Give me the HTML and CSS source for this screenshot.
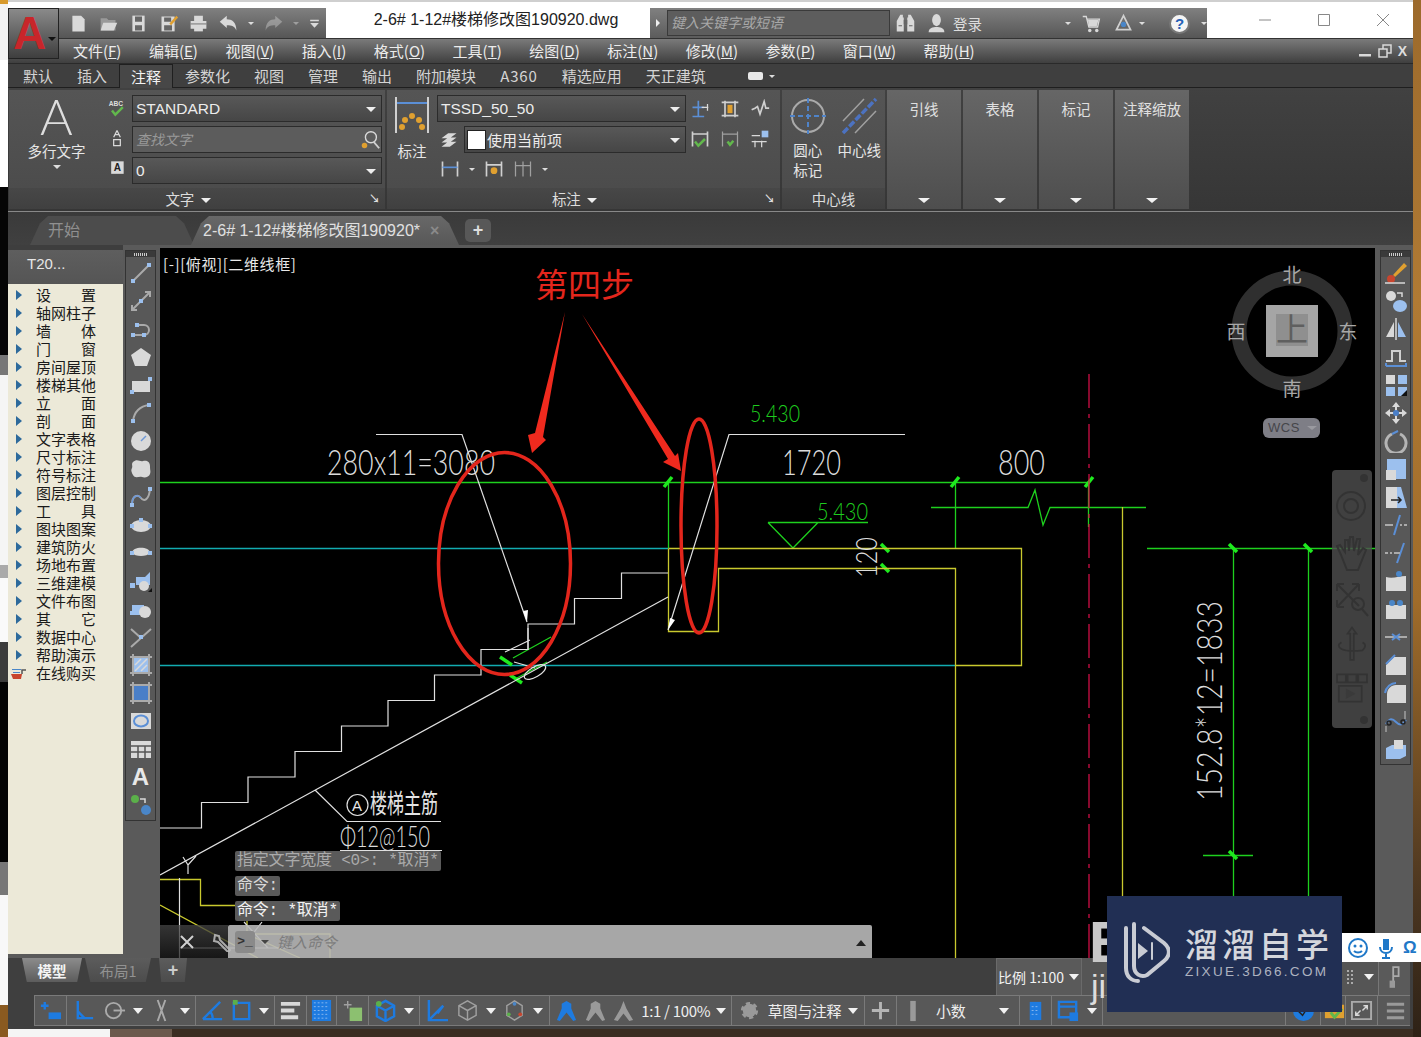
FILE: index.html
```html
<!DOCTYPE html>
<html lang="zh-CN">
<head>
<meta charset="utf-8">
<title>AutoCAD</title>
<link rel="stylesheet" href="styles.css">
</head>
<body>
<div class="app">

  <header class="titlebar">
    <div class="logo"><span class="logo-a">A</span><span class="logo-caret"></span></div>
    <div class="qat">
      <svg class="qi" viewBox="0 0 24 24"><path class="fw" d="M5 3h10l4 4v14H5z"/></svg>
      <svg class="qi" viewBox="0 0 24 24"><path class="fg" d="M3 6h7l2 2h8v12H3z"/><path class="fw" d="M6 11h16l-4 9H3z"/></svg>
      <svg class="qi" viewBox="0 0 24 24"><path class="fw" d="M5 3h14v18H5z"/><path class="fd" d="M8 4h8v6H8zM8 14h8v6H8z"/></svg>
      <svg class="qi" viewBox="0 0 24 24"><path class="fw" d="M4 4h15v17H4z"/><path class="fd" d="M7 5h8v5H7zM7 14h9v6H7z"/><path class="fy" d="M13 12l8-9 2 2-8 9z"/></svg>
      <svg class="qi" viewBox="0 0 24 24"><path class="fw" d="M7 3h10v6H7zM3 9h18v9H3z"/><path class="fd" d="M3 12h18v1H3z"/><path class="fw" d="M7 15h10v6H7z"/></svg>
      <svg class="qi" viewBox="0 0 24 24"><path class="fw" d="M2 10l8-7v4c6 0 11 3 11 13-2-5-5-6-11-6v3z"/></svg>
      <span class="mini-caret"></span>
      <svg class="qi dim" viewBox="0 0 24 24"><path class="fw" d="M22 10l-8-7v4C8 7 3 10 3 20c2-5 5-6 11-6v3z"/></svg>
      <span class="mini-caret dim"></span>
      <svg class="qi sm" viewBox="0 0 24 24"><path class="fw" d="M4 5h16v3H4zM4 11h16l-8 9z"/></svg>
    </div>
    <div class="doc-title">2-6# 1-12#楼梯修改图190920.dwg</div>
    <div class="search">
      <span class="search-arrow"></span>
      <div class="search-input">键入关键字或短语</div>
    </div>
    <div class="info-tools">
      <svg class="qi" viewBox="0 0 24 24"><path class="fw" d="M6 2h3v3h1v16H2V9zM15 2h3l4 7v12h-8V5h1z"/><path class="fd" d="M10 8h4v5h-4z"/><path class="fd" d="M4 14h4v1H4zM16 14h4v1h-4z"/></svg>
      <svg class="qi user" viewBox="0 0 24 24"><ellipse class="fw" cx="12" cy="8" rx="5" ry="7"/><path class="fw" d="M3 22c0-5 5-6 9-6s9 1 9 6z"/></svg>
      <span class="login">登录</span>
      <span class="mini-caret push"></span>
      <svg class="qi cart" viewBox="0 0 24 24"><path class="sw" d="M2 4h4l3 12h10l2-9H7"/><path class="fw" d="M8 8h12l-2 7H9z"/><circle class="fw" cx="10" cy="20" r="2"/><circle class="fw" cx="18" cy="20" r="2"/></svg>
      <svg class="qi a360" viewBox="0 0 24 24"><path class="sw2" d="M12 3l8 16H4z"/><circle class="fb" cx="12" cy="13" r="3"/></svg>
      <span class="mini-caret"></span>
      <span class="help">?</span>
      <span class="mini-caret"></span>
    </div>
    <div class="win-ctl">
      <svg viewBox="0 0 14 14"><path class="wc" d="M1 7h12"/></svg>
      <svg viewBox="0 0 14 14"><path class="wc" d="M1.5 1.5h11v11h-11z"/></svg>
      <svg viewBox="0 0 14 14"><path class="wc" d="M1 1l12 12M13 1L1 13"/></svg>
    </div>
  </header>

  <nav class="menubar">
    <span>文件(<u>F</u>)</span><span>编辑(<u>E</u>)</span><span>视图(<u>V</u>)</span><span>插入(<u>I</u>)</span><span>格式(<u>O</u>)</span><span>工具(<u>T</u>)</span><span>绘图(<u>D</u>)</span><span>标注(<u>N</u>)</span><span>修改(<u>M</u>)</span><span>参数(<u>P</u>)</span><span>窗口(<u>W</u>)</span><span>帮助(<u>H</u>)</span>
    <div class="doc-ctl">
      <svg viewBox="0 0 14 14"><path class="fw" d="M1 10h12v2.500H1z"/></svg>
      <svg viewBox="0 0 14 14"><path class="sw" d="M1 5h8v8H1zM5 5V1h8v8H9"/></svg>
      <span class="doc-x">X</span>
    </div>
  </nav>

  <div class="ribbon-tabs">
    <span>默认</span><span>插入</span><span class="on">注释</span><span>参数化</span><span>视图</span><span>管理</span><span>输出</span><span>附加模块</span><span class="a360-tab">A360</span><span>精选应用</span><span>天正建筑</span>
    <span class="rt-toggle"><i class="rt-pill"></i><i class="mini-caret"></i></span>
  </div>

  <section class="ribbon">
    <div class="pnl pnl-text">
      <div class="pnl-body">
        <div class="big-a">
          <span class="big-letter">A</span>
          <span class="big-label">多行文字</span>
          <span class="mini-caret"></span>
        </div>
        <div class="side-col">
          <svg class="ri" viewBox="0 0 24 24"><text x="2" y="10" class="tiny">ABC</text><path class="sgreen" d="M6 15l4 5 9-9"/></svg>
          <svg class="ri" viewBox="0 0 24 24"><path class="sw" d="M12 3l-4 8M12 3l4 8M9 8h6M8 14h8v7H8z"/></svg>
          <svg class="ri" viewBox="0 0 24 24"><path class="fw" d="M5 4h15v15H5z"/><text x="8" y="16" class="tiny-d">A</text></svg>
        </div>
        <div class="combo-col">
          <div class="combo"><span>STANDARD</span></div>
          <div class="combo find"><em>查找文字</em><svg class="find-i" viewBox="0 0 24 24"><circle class="sw" cx="13" cy="9" r="6"/><path class="sw2" d="M16 14l6 7"/><circle class="fy" cx="6" cy="18" r="3"/></svg></div>
          <div class="combo"><span>0</span></div>
        </div>
      </div>
      <div class="pnl-foot">文字 <i class="foot-caret"></i><i class="launch">↘</i></div>
    </div>

    <div class="pnl pnl-dim">
      <div class="pnl-body">
        <div class="big-dim">
          <svg viewBox="0 0 36 38"><path class="sw2" d="M2 1v36M34 1v36"/><path class="sblue2" d="M3 7h30"/><circle class="fy" cx="18" cy="20" r="3"/><circle class="fy" cx="11" cy="24" r="3"/><circle class="fy" cx="25" cy="24" r="3"/><circle class="fy" cx="8" cy="31" r="3"/><circle class="fy" cx="28" cy="31" r="3"/></svg>
          <span>标注</span>
        </div>
        <div class="combo-col dim-col">
          <div class="combo"><span>TSSD_50_50</span></div>
          <div class="dim-row">
            <svg class="ri layers" viewBox="0 0 24 24"><path class="fw" d="M3 10l8-6h10l-8 6zM3 15l8-6h10l-8 6zM3 20l8-6h10l-8 6z"/></svg>
            <div class="combo swatch-combo"><i class="swatch"></i><span>使用当前项</span></div>
          </div>
          <div class="dim-tools">
            <svg class="ri" viewBox="0 0 24 24"><path class="sw2" d="M3 3v18M21 3v18"/><path class="sblue2" d="M3 10h18"/></svg><span class="mini-caret"></span>
            <svg class="ri" viewBox="0 0 24 24"><path class="sw2" d="M3 3v18M21 3v18M3 7h18"/><circle class="fy" cx="12" cy="14" r="4"/></svg>
            <svg class="ri" viewBox="0 0 24 24"><path class="sg" d="M3 3v18M12 3v18M21 3v18M3 8h18"/></svg><span class="mini-caret"></span>
          </div>
        </div>
        <div class="dim-grid">
          <svg class="ri" viewBox="0 0 24 24"><path class="sblue2" d="M10 2v20M3 21h14M3 10h14"/><path class="sw" d="M14 10h8M21 6v8"/></svg>
          <svg class="ri" viewBox="0 0 24 24"><path class="sw2" d="M2 4h20M2 20h20M6 2v20M18 2v20"/><path class="fy" d="M9 7h6v10H9z"/></svg>
          <svg class="ri" viewBox="0 0 24 24"><path class="sw2" d="M2 13l4-2 3-2 3 9 5-15 2 8h4"/></svg>
          <svg class="ri" viewBox="0 0 24 24"><path class="sw2" d="M3 3v18M21 3v18M3 6h18"/><path class="sgreen" d="M6 15l4 5 8-8"/></svg>
          <svg class="ri" viewBox="0 0 24 24"><path class="sg" d="M3 3v18M21 3v18M3 6h18"/><path class="sgreen" d="M9 15l3 4 4-5"/></svg>
          <svg class="ri" viewBox="0 0 24 24"><path class="sw" d="M2 8h10M6 14v8M14 14v8M2 15h18"/><path class="flb" d="M14 2h8v8h-8z"/></svg>
        </div>
      </div>
      <div class="pnl-foot">标注 <i class="foot-caret"></i><i class="launch">↘</i></div>
    </div>

    <div class="pnl pnl-center">
      <div class="pnl-body">
        <div class="cm-btn">
          <svg viewBox="0 0 38 38"><circle class="sg2" cx="19" cy="19" r="16"/><path class="sdash" d="M1 19h36M19 1v36"/></svg>
          <span>圆心<br>标记</span>
        </div>
        <div class="cm-btn">
          <svg viewBox="0 0 38 38"><path class="sg" d="M3 24L24 2M15 36L36 14"/><path class="sdash2" d="M3 36L36 2"/></svg>
          <span>中心线</span>
        </div>
      </div>
      <div class="pnl-foot center-foot">中心线</div>
    </div>

    <div class="collapsed"><span>引线</span><i class="white-caret"></i></div>
    <div class="collapsed"><span>表格</span><i class="white-caret"></i></div>
    <div class="collapsed"><span>标记</span><i class="white-caret"></i></div>
    <div class="collapsed"><span>注释缩放</span><i class="white-caret"></i></div>
  </section>

  <div class="doc-tabs">
    <div class="dt dt-start">开始</div>
    <div class="dt dt-active">2-6# 1-12#楼梯修改图190920*<b>×</b></div>
    <div class="dt-plus">+</div>
  </div>

  <main class="workspace">
    <aside class="t20">
      <div class="t20-head">T20...</div>
      <ul class="t20-list">
        <li><span>设 置</span></li><li><span>轴网柱子</span></li><li><span>墙 体</span></li><li><span>门 窗</span></li><li><span>房间屋顶</span></li><li><span>楼梯其他</span></li><li><span>立 面</span></li><li><span>剖 面</span></li><li><span>文字表格</span></li><li><span>尺寸标注</span></li><li><span>符号标注</span></li><li><span>图层控制</span></li><li><span>工 具</span></li><li><span>图块图案</span></li><li><span>建筑防火</span></li><li><span>场地布置</span></li><li><span>三维建模</span></li><li><span>文件布图</span></li><li><span>其 它</span></li><li><span>数据中心</span></li><li><span>帮助演示</span></li>
        <li class="buy"><svg viewBox="0 0 20 14"><path class="fb" d="M2 3h9v1H2zM3 6h7v1H3z"/><path class="fr" d="M1 8h11l-1 5H3z"/><path class="sd" d="M12 8V4h4"/></svg><span>在线购买</span></li>
      </ul>
    </aside>

    <div class="tool-strip">
      <div class="tool-col">
        <i class="grip"></i>
        <svg viewBox="0 0 24 24"><path class="sg2" d="M4 20L20 4"/><path class="flb" d="M2 18h4v4H2zM18 2h4v4h-4z"/></svg>
        <svg viewBox="0 0 24 24"><path class="sg2" d="M3 21L21 3M3 16v5h5M16 3h5v5"/><path class="flb" d="M10 10h4v4h-4z"/></svg>
        <svg viewBox="0 0 24 24"><path class="sg2" d="M5 18h10a5 5 0 0 0 0-10H9"/><path class="flb" d="M2 16h4v4H2zM13 16h4v4h-4zM6 6h4v4H6z"/></svg>
        <svg viewBox="0 0 24 24"><path class="fw" d="M12 3l10 7-4 11H6L2 10z"/></svg>
        <svg viewBox="0 0 24 24"><path class="fw" d="M3 8h18v11H3z"/><path class="flb" d="M1 17h4v4H1zM19 4h4v4h-4z"/></svg>
        <svg viewBox="0 0 24 24"><path class="sg2" d="M4 20C5 11 11 5 20 4"/><path class="flb" d="M2 18h4v4H2zM18 2h4v4h-4z"/></svg>
        <svg viewBox="0 0 24 24"><circle class="fw" cx="12" cy="12" r="10"/><path class="sblue" d="M12 12l5-5"/></svg>
        <svg viewBox="0 0 24 24"><path class="fw" d="M4 5c4-4 7 0 10-1s7 0 7 5 1 5 0 8-5 4-8 3-7 2-9-2-2-5-1-7-1-4 1-6z"/></svg>
        <svg viewBox="0 0 24 24"><path class="sg2" d="M3 20C3 10 9 9 12 13s8 2 9-9"/><path class="sblue" d="M3 20C3 10 9 9 12 13"/><path class="flb" d="M19 2h4v4h-4zM1 18h4v4H1z"/></svg>
        <svg viewBox="0 0 24 24"><ellipse class="fw" cx="12" cy="13" rx="10" ry="6"/><path class="flb" d="M10 5h4v4h-4zM1 11h4v4H1zM19 11h4v4h-4z"/></svg>
        <svg viewBox="0 0 24 24"><path class="fw" d="M3 12c0-7 18-7 18 0-3 4-15 4-18 0z"/><path class="flb" d="M1 10h4v4H1zM19 10h4v4h-4z"/></svg>
        <svg viewBox="0 0 24 24"><path class="flb" d="M7 8h9l5-5v13H7z"/><circle class="fw" cx="15" cy="17" r="5"/><path class="flb" d="M1 14h5v5H1z"/><path class="fk" d="M19 23l4-4v4z"/></svg>
        <svg viewBox="0 0 24 24"><path class="flb" d="M3 8h12v10H3z"/><circle class="fw" cx="16" cy="15" r="6"/><path class="flb" d="M1 14h4v4H1z"/></svg>
        <svg viewBox="0 0 24 24"><path class="sg2" d="M2 22L22 4M2 4l10 9"/><path class="flb" d="M10 10h4v4h-4z"/></svg>
        <svg viewBox="0 0 24 24"><path class="flb" d="M4 4h16v16H4z"/><path class="sg2" d="M1 4h22M1 20h22M4 1v22M20 1v22"/><path class="sw" d="M6 12l6-6M6 18l12-12M12 18l6-6"/></svg>
        <svg viewBox="0 0 24 24"><path class="fblue" d="M4 4h16v16H4z"/><path class="sg2" d="M1 4h22M1 20h22M4 1v22M20 1v22"/></svg>
        <svg viewBox="0 0 24 24"><path class="fw" d="M2 4h20v16H2z"/><ellipse class="sblue2" cx="12" cy="12" rx="7" ry="5.500"/></svg>
        <svg viewBox="0 0 24 24"><path class="fw" d="M2 4h20v17H2z"/><path class="sd" d="M2 9h20M2 15h20M9 9v12M16 9v12"/></svg>
        <span class="tool-a">A</span>
        <svg viewBox="0 0 24 24"><circle class="fgreen" cx="6" cy="6" r="4"/><path class="sw" d="M11 6h5v4"/><circle class="fb" cx="17" cy="17" r="5"/></svg>
      </div>
    </div>

    <div class="canvas">
      <svg class="cad" viewBox="160 248 1215 710" preserveAspectRatio="none">
        <g class="teal">
          <path d="M160 548.500H668M160 665.500H955"/>
        </g>
        <g class="green">
          <path d="M160 482.500H1089M668.500 482V548M955.500 482V548M1088.500 482V527M931 507.500H1028L1035 490 1043 525 1050 507.500H1146M1147 548.500H1375M1233.500 548V958M1308.500 548V958M1203 855.500H1253M513 658L551 637M517 678L547 662"/>
          <path d="M768 522.500H868M768 522.500L793 548 818 522.500"/>
        </g>
        <g class="ticks">
          <path d="M664 487L672 477M951 487L959 477M1085 487L1093 477M1229 544L1237 552M1304 544L1312 552M1229 851L1237 859M881 544L889 552M881 564L889 572M500 657L512 665M510 675L522 683"/>
        </g>
        <g class="yellow">
          <path d="M668.500 548.500H1021.500V665.500H955.500M668.500 548.500V631.500H718.500V568.500H955.500V958M1122.500 507V958"/>
          <path d="M160 879.500H200.500V905.500H236M160 905L258 958M247 920V934M247 934H330V958M247 934L300 958"/>
        </g>
        <path class="redcl" d="M1089 374V958"/>
        <g class="white">
          <path d="M668 573H621.500V598.500H574.500V624H528V649.500H481V675H434.500V700.500H388V726H341.500V751.500H295V777H248V802.500H201.500V828H160"/>
          <path d="M668 597L160 875M315 790L347 821.500H441M340 850.500H442M376 434.500H462L527 622M905 434.500H729L668 630M528 628V650M530 640L505 652M514 662L535 668"/>
          <path d="M183 857L188 865 196 856M188 865V874M179.500 878V958M179.500 948L288 948M244 922L268 948M262 922L240 950"/>
          <ellipse cx="535" cy="672" rx="12" ry="5" transform="rotate(-30 535 672)"/>
          <circle cx="357.500" cy="805" r="10.500"/>
        </g>
        <path class="apoint" d="M527 622l-4-11 5-1zM668 630l2-12 5 2z"/>
        <text class="cad-t" x="327" y="475" textLength="168" lengthAdjust="spacingAndGlyphs">280x11=3080</text>
        <text class="cad-t" x="782" y="475" textLength="59" lengthAdjust="spacingAndGlyphs">1720</text>
        <text class="cad-t" x="998" y="475" textLength="47" lengthAdjust="spacingAndGlyphs">800</text>
        <text class="cad-g" x="750" y="422" textLength="50" lengthAdjust="spacingAndGlyphs">5.430</text>
        <text class="cad-g" x="817" y="520" textLength="51" lengthAdjust="spacingAndGlyphs">5.430</text>
        <text class="cad-t t26" transform="translate(877 578) rotate(-90)" textLength="41" lengthAdjust="spacingAndGlyphs">120</text>
        <text class="cad-t" transform="translate(1222 801) rotate(-90)" textLength="200" lengthAdjust="spacingAndGlyphs">152.8*12=1833</text>
        <text class="cad-s" x="352" y="811">A</text>
        <text class="cad-c" x="370" y="813" textLength="68" lengthAdjust="spacingAndGlyphs">楼梯主筋</text>
        <text class="cad-t t30" x="340" y="847" textLength="90" lengthAdjust="spacingAndGlyphs">Φ12@150</text>
        <text class="note" x="535" y="297">第四步</text>
        <ellipse class="red" cx="504.500" cy="563.500" rx="66" ry="111"/>
        <ellipse class="red" cx="699" cy="526" rx="18" ry="107"/>
        <path class="redf" d="M565 312L543 437 546 440 532 453 528 435 535 433z"/>
        <path class="redf" d="M582 314L675 456 678 453 681 471 663 462 668 459z"/>
        <circle class="cube-ring" cx="1292" cy="331" r="53"/>
        <rect class="cube-face" x="1266" y="305" width="52" height="52"/>
        <rect class="cube-inner" x="1276" y="314" width="32" height="32"/>
        <text class="cube-top" x="1292" y="341">上</text>
        <text class="cube-l" x="1292" y="282">北</text>
        <text class="cube-l" x="1292" y="396">南</text>
        <text class="cube-l" x="1348" y="339">东</text>
        <text class="cube-l" x="1236" y="339">西</text>
      </svg>

      <div class="view-label">[-][俯视][二维线框]</div>
      <div class="wcs">WCS <i></i></div>

      <div class="navbar">
        <i class="nb-dot"></i>
        <svg viewBox="0 0 40 44"><circle class="nb" cx="19" cy="22" r="14"/><circle class="nb" cx="19" cy="22" r="7"/></svg>
        <svg viewBox="0 0 40 44"><path class="nb" d="M9 24l-4-9 3-1 5 7V9h3l1 11 1-14h3l1 14 3-12h3l-2 16 5-7 3 2-8 20H15z"/></svg>
        <svg viewBox="0 0 40 44"><path class="nb" d="M5 7l22 22M5 30L27 7M5 7h7M5 7v7M27 7h-7M27 7v7M5 30h7M5 30v-7"/><circle class="nb" cx="26" cy="27" r="6"/><path class="nb" d="M30 32l6 7"/></svg>
        <svg viewBox="0 0 40 50"><path class="nb" d="M20 5l-5 7h3v30h4V12h3zM8 22c-8 5 0 12 24 9 4-4 4-7 0-9"/></svg>
        <svg viewBox="0 0 40 50"><path class="nb" d="M3 5h10v9H3zM15 5h10v9H15zM27 5h10v9H27zM5 18h26v18H5z"/><path class="nbf" d="M13 21l11 6-11 6z"/></svg>
        <i class="nb-dot"></i>
      </div>

      <div class="cmd-history">
        <div class="cmd-line dim">指定文字宽度 &lt;0&gt;: *取消*</div>
        <div class="cmd-line">命令:</div>
        <div class="cmd-line bright">命令: *取消*</div>
      </div>
      <div class="cmdbar">
        <div class="cmd-tools">
          <i class="cmd-grip"></i>
          <svg viewBox="0 0 20 20"><path class="sw2" d="M4 4l12 12M16 4L4 16"/></svg>
          <svg viewBox="0 0 20 20"><path class="sg2" d="M3 3l4 1 1 4 10 10-2 2L6 10 2 9z"/></svg>
        </div>
        <div class="cmd-input">
          <span class="cmd-prompt">&gt;_</span><i class="cmd-caret"></i>
          <em>键入命令</em>
          <i class="cmd-up"></i>
        </div>
      </div>
    </div>

    <div class="tool-strip right">
      <div class="tool-col">
        <i class="grip"></i>
        <svg viewBox="0 0 24 24"><path class="fy" d="M9 14L20 2l3 3-12 11z"/><circle class="fr" cx="7" cy="18" r="4"/><path class="sw" d="M1 22h20"/></svg>
        <svg viewBox="0 0 24 24"><circle class="fw" cx="7" cy="7" r="5"/><ellipse class="flb" cx="16" cy="17" rx="7" ry="6"/><path class="sw" d="M13 4h5v4"/></svg>
        <svg viewBox="0 0 24 24"><path class="fw" d="M10 5v15H2z"/><path class="flb" d="M14 5v15h8z"/><path class="sw" d="M12 1v22"/></svg>
        <svg viewBox="0 0 24 24"><path class="sw2" d="M2 16h6V6h8v10h6"/><path class="sblue2" d="M2 21h20v-3M2 21v-3"/></svg>
        <svg viewBox="0 0 24 24"><path class="fw" d="M2 2h9v9H2z"/><path class="flb" d="M14 2h9v9h-9zM2 14h9v9H2zM14 14h9v9h-9z"/><path class="fk" d="M17 23l6-6v6z"/></svg>
        <svg viewBox="0 0 24 24"><path class="fw" d="M12 1l4 5h-3v5h5V8l5 4-5 4v-3h-5v5h3l-4 5-4-5h3v-5H6v3l-5-4 5-4v3h5V6H8z"/><circle class="fblue" cx="12" cy="12" r="3"/></svg>
        <svg viewBox="0 0 24 24"><path class="sg3" d="M8 5a10 10 0 1 0 8 0"/><path class="sblue2" d="M8 5l6-3"/></svg>
        <svg viewBox="0 0 24 24"><path class="flb" d="M3 2h19v20H3z"/><path class="fw" d="M2 13h10v10H2z"/></svg>
        <svg viewBox="0 0 24 24"><path class="fw" d="M2 2h11v21H2z"/><path class="flb" d="M13 2h4l6 21H13z"/><path class="sk" d="M7 15h10M14 12l3 3-3 3"/></svg>
        <svg viewBox="0 0 24 24"><path class="sblue2" d="M10 22L16 2"/><path class="sg2" d="M1 12h8M16 12h2M20 12h3"/></svg>
        <svg viewBox="0 0 24 24"><path class="sblue2" d="M13 22L20 2"/><path class="sg2" d="M1 12h3M6 12h2M10 12h6"/></svg>
        <svg viewBox="0 0 24 24"><path class="fw" d="M2 8c7 2 13-1 20-1v15H2z"/><circle class="fb" cx="15" cy="5" r="3"/></svg>
        <svg viewBox="0 0 24 24"><path class="fw" d="M2 8h20v14H2z"/><circle class="fb" cx="8" cy="6" r="3"/><circle class="fb" cx="16" cy="6" r="3"/></svg>
        <svg viewBox="0 0 24 24"><path class="sg2" d="M1 12h22"/><path class="sblue2" d="M8 9l4 3 4-3M8 15l4-3 4 3"/></svg>
        <svg viewBox="0 0 24 24"><path class="fw" d="M10 4h12v18H2V12z"/><path class="sblue2" d="M2 11l9-9"/></svg>
        <svg viewBox="0 0 24 24"><path class="fw" d="M12 4h10v18H3v-9c0-5 4-9 9-9z"/><path class="sblue2" d="M1 12C2 6 7 2 12 2"/></svg>
        <svg viewBox="0 0 24 24"><path class="sblue2" d="M2 15c4-6 6-6 10-2s7 3 10-2"/><circle class="sk" cx="5" cy="14" r="2"/><circle class="sk" cx="19" cy="13" r="2"/><path class="sg" d="M2 17v6M21 2v8"/></svg>
        <svg viewBox="0 0 24 24"><path class="flb" d="M2 11l6-3h14v11l-6 3H2z"/><path class="fw" d="M10 3h9v9h-9z"/></svg>
      </div>
    </div>
  </main>

  <footer class="bottom">
    <div class="layout-row">
      <div class="ltab on">模型</div>
      <div class="ltab">布局1</div>
      <div class="ltab plus">+</div>
      <div class="scale-group">
        <div class="scale">比例 1:100 <i class="white-caret sm"></i></div>
        <div class="scale-blank"></div>
        <div class="scale-dots"><i class="dots"></i><i class="white-caret sm"></i></div>
        <div class="scale-note"><svg viewBox="0 0 20 26"><path class="sg2" d="M8 2h6v10H8zM8 12v12"/><path class="fg" d="M4 17h6v8H4z"/></svg></div>
      </div>
    </div>
    <div class="statusbar">
      <div class="st w32"><svg viewBox="0 0 24 24"><path class="ssb" d="M6 3v8M2 7h8"/><path class="fsb" d="M10 14h13v7H10z"/></svg></div>
      <div class="st w129">
        <svg viewBox="0 0 24 24"><path class="ssb" d="M5 2v18h16M5 13l7 7"/></svg>
        <svg viewBox="0 0 24 24"><circle class="sg2" cx="11" cy="12" r="8"/><path class="sg2" d="M11 12h12"/></svg><i class="white-caret sm"></i>
        <svg viewBox="0 0 24 24"><path class="sg2" d="M8 1l8 22M16 1L8 23"/></svg><i class="white-caret sm"></i>
      </div>
      <div class="st w79">
        <svg viewBox="0 0 24 24"><path class="ssb" d="M2 21h20M2 21L20 3M12 21a9 9 0 0 0-3-8"/></svg>
        <svg viewBox="0 0 24 24"><path class="ssb" d="M4 4h16v17H4z"/><path class="fgreen" d="M3 1h5v5H3z"/></svg><i class="white-caret sm"></i>
      </div>
      <div class="st w32"><svg viewBox="0 0 24 24"><path class="fw" d="M2 3h20v4H2zM2 10h14v4H2zM2 17h18v4H2z"/></svg></div>
      <div class="st w30"><svg viewBox="0 0 24 24"><path class="fsb" d="M2 1h20v22H2z"/><path class="dotsb" d="M4 4h16M4 8h16M4 12h16M4 16h16M4 20h16"/></svg></div>
      <div class="st w32"><svg viewBox="0 0 24 24"><path class="sg" d="M3 6h8M7 2v8"/><path class="fgl" d="M9 9h13v14H9z"/></svg></div>
      <div class="st w51"><svg viewBox="0 0 24 24"><path class="ssb" d="M12 2l9 5v11l-9 5-9-5V7zM12 12l9-5M12 12v11M12 12L3 7"/><circle class="fgreen" cx="5" cy="5" r="3"/></svg><i class="white-caret sm"></i></div>
      <div class="st w130">
        <svg viewBox="0 0 24 24"><path class="ssb" d="M3 1v21h20M3 22L18 7M12 15l6-8"/></svg>
        <svg viewBox="0 0 24 24"><path class="sg" d="M12 2l9 5v10l-9 5-9-5V7zM12 12l9-5M12 12v10M12 12L3 7"/></svg><i class="white-caret sm"></i>
        <svg viewBox="0 0 24 24"><path class="sg" d="M12 2l8 5v10l-8 5-8-5V7z"/><circle class="fb" cx="12" cy="5" r="2"/><circle class="fgreen" cx="6" cy="16" r="2"/><circle class="fr" cx="18" cy="16" r="2"/></svg><i class="white-caret sm"></i>
      </div>
      <div class="st w182">
        <svg viewBox="0 0 24 24"><path class="fsb" d="M12 2l5 3v5l5 12-3 1-7-9-7 9-3-1 5-12V5z"/></svg>
        <svg viewBox="0 0 24 24"><path class="fg" d="M12 2l5 3v5l5 12-3 1-7-9-7 9-3-1 5-12V5z"/></svg>
        <svg viewBox="0 0 24 24"><path class="fg" d="M12 2l3 8 7 12-4 1-6-8-6 8-4-1 7-12z"/></svg>
        <span class="st-t">1:1 / 100%</span><i class="white-caret sm"></i>
      </div>
      <div class="st w133">
        <svg viewBox="0 0 24 24"><circle class="gear" cx="12" cy="12" r="7"/><circle class="fg" cx="12" cy="12" r="7"/></svg>
        <span class="st-t">草图与注释</span><i class="white-caret sm"></i>
      </div>
      <div class="st w32"><svg viewBox="0 0 24 24"><path class="sg3" d="M12 3v18M3 12h18"/></svg></div>
      <div class="st w123 st-num">
        <svg class="ruler" viewBox="0 0 10 24"><path class="fg" d="M2 1h6v22H2z"/></svg>
        <span class="st-t">小数</span><i class="white-caret sm"></i>
      </div>
      <div class="st w32"><svg viewBox="0 0 24 24"><path class="fsb" d="M6 3h12v19H6z"/><path class="dotsb" d="M8 8h8M8 12h8M8 16h8"/></svg></div>
      <div class="st w51"><svg viewBox="0 0 24 24"><path class="ssb" d="M2 3h18v16H2zM2 8h18"/><path class="fsb" d="M13 14h9v9h-9z"/></svg><i class="white-caret sm"></i></div>
      <div class="st w183"></div>
      <div class="st w35"><svg viewBox="0 0 24 24"><circle class="fsb" cx="12" cy="12" r="11"/><path class="sk" d="M7 13l4 4 6-9"/></svg></div>
      <div class="st w25"><svg viewBox="0 0 24 24"><path class="fy" d="M2 6h20v14H2z"/><path class="sgreen" d="M8 14l4 5 8-9"/></svg></div>
      <div class="st w32"><svg viewBox="0 0 24 24"><path class="sg2" d="M2 3h20v18H2z"/><path class="sw" d="M6 17l5-5M6 13v4h4M18 7l-5 5M18 11V7h-4"/></svg></div>
      <div class="st w35"><svg viewBox="0 0 24 24"><path class="fg" d="M3 4h18v3H3zM3 11h18v3H3zM3 18h18v3H3z"/></svg></div>
    </div>
  </footer>
</div>

<div class="peek peek-e">E</div>
<div class="peek peek-ji">ji</div>

<aside class="watermark">
  <svg viewBox="0 0 50 64"><path class="wm" d="M14 4v42c0 8 7 12 13 9l17-14c7-6 6-13 0-18L24 8"/><path class="wm" d="M6 8v40c0 8 5 13 12 13"/><path class="wmf" d="M18 23l10 8-10 8z"/><path class="wm thin" d="M32 23v16"/></svg>
  <div class="wm-text">
    <strong>溜溜自学</strong>
    <span>ZIXUE.3D66.COM</span>
  </div>
</aside>
<div class="ime">
  <svg viewBox="0 0 22 22"><circle class="ime-s" cx="11" cy="11" r="9"/><circle class="ime-f" cx="8" cy="9" r="1.500"/><circle class="ime-f" cx="14" cy="9" r="1.500"/><path class="ime-s" d="M7 14c2 2 6 2 8 0"/></svg>
  <svg viewBox="0 0 22 22"><path class="ime-f" d="M8 2h6v11H8z"/><path class="ime-s" d="M5 10c0 8 12 8 12 0M11 17v4M7 21h8"/></svg>
  <span>Ω</span>
</div>
</body>
</html>
```
FILE: styles.css
```css
* { box-sizing: border-box; }
html, body { margin: 0; padding: 0; }
body {
  position: relative;
  width: 1421px;
  height: 1037px;
  overflow: hidden;
  font-family: "Noto Sans CJK SC", "Noto Sans", sans-serif;
  color: #e6e6e6;
  background-color: #3a2a1c;
  background-image:
    linear-gradient(to bottom, #d89a2c 0 4px, #f2f2f2 4px 60px, #fff 60px 187px, #050505 187px 355px, #777 355px 375px, #f5f5f5 375px 565px, #aaa 565px 578px, #fafafa 578px 642px, #3c3c3c 642px 682px, #040404 682px 862px, #777 862px 895px, #f8f8f8 895px 1005px, #8a5a20 1005px 1037px),
    linear-gradient(to bottom, #9c6a2c 0, #b07a34 300px, #a06c2a 600px, #4a3520 900px, #2e2216 1037px),
    linear-gradient(to right, #f5f5f5 0 110px, #6b5a4d 110px 172px, #3b2e22 172px 100%);
  background-size: 8px 100%, 8px 100%, 100% 8px;
  background-position: left top, right top, left bottom;
  background-repeat: no-repeat;
}
i { font-style: normal; display: inline-block; }
svg { display: block; flex: none; }

/* shared svg paints */
.fw { fill: #d9d9d9; }
.fg { fill: #9a9a9a; }
.fd { fill: #666; }
.fy { fill: #e0a030; }
.fb { fill: #4a86c8; }
.fr { fill: #c8452e; }
.fk { fill: #111; }
.flb { fill: #9cc0ee; }
.fblue { fill: #4a7fc8; }
.fgreen { fill: #5bb04a; }
.fgl { fill: #8cc070; }
.fsb { fill: #1e7be0; }
.sw { fill: none; stroke: #d9d9d9; stroke-width: 1.500; }
.sw2 { fill: none; stroke: #d0d0d0; stroke-width: 2; }
.sg { fill: none; stroke: #a0a0a0; stroke-width: 1.500; }
.sg2 { fill: none; stroke: #aaa; stroke-width: 2; }
.sg3 { fill: none; stroke: #b5b5b5; stroke-width: 3; }
.sd { fill: none; stroke: #555; stroke-width: 1.500; }
.sk { fill: none; stroke: #222; stroke-width: 1.500; }
.sblue { fill: none; stroke: #6d98d8; stroke-width: 1.500; }
.sblue2 { fill: none; stroke: #5b8fd6; stroke-width: 2; }
.sgreen { fill: none; stroke: #62b84c; stroke-width: 3; }
.ssb { fill: none; stroke: #1e7be0; stroke-width: 2.500; }
.sdash { fill: none; stroke: #4f83c8; stroke-width: 2; stroke-dasharray: 5 3; }
.sdash2 { fill: none; stroke: #4c72c0; stroke-width: 3.500; stroke-dasharray: 7 2; }
.dotsb { fill: none; stroke: #8ab8ee; stroke-width: 1; stroke-dasharray: 2 2; }
.tiny { font: bold 8px "Liberation Sans", sans-serif; fill: #ddd; }
.tiny-d { font: bold 12px "Liberation Sans", sans-serif; fill: #222; }

.mini-caret {
  width: 0; height: 0;
  border-left: 3px solid transparent;
  border-right: 3px solid transparent;
  border-top: 3px solid #ddd;
}
.mini-caret.dim { opacity: .45; }
.white-caret {
  width: 0; height: 0;
  border-left: 6px solid transparent;
  border-right: 6px solid transparent;
  border-top: 5px solid #f2f2f2;
}
.white-caret.sm { border-left-width: 5px; border-right-width: 5px; border-top-width: 6px; }

/* app frame */
.app {
  display: flex;
  flex-direction: column;
  width: 1405px;
  height: 1029px;
  margin-left: 8px;
  background: #3d3d3d;
  border-top: 2px solid #cfcfcf;
}

/* title bar */
.titlebar {
  position: relative;
  display: flex;
  align-items: flex-end;
  height: 36px;
  background: #fff;
}
.logo {
  position: absolute;
  left: 0; top: 6px;
  z-index: 3;
  width: 51px; height: 51px;
  background: linear-gradient(#8a8a8a, #3e3e3e);
  border: 1px solid #222;
}
.logo-a {
  position: absolute;
  left: 4px; top: -2px;
  font: bold 46px/52px "Liberation Sans", sans-serif;
  color: #c8262a;
}
.logo-caret {
  position: absolute;
  right: 2px; top: 28px;
  border-left: 4px solid transparent;
  border-right: 4px solid transparent;
  border-top: 4px solid #111;
}
.qat, .info-tools {
  display: flex;
  align-items: center;
  height: 30px;
  background: linear-gradient(#808080, #565656);
}
.qat {
  width: 267px;
  margin-left: 51px;
  padding-left: 9px;
  gap: 9px;
}
.qi { width: 21px; height: 21px; }
.qi.sm { width: 13px; height: 13px; }
.qi.dim { opacity: .4; }
.doc-title {
  flex: none;
  width: 324px;
  height: 36px;
  padding-left: 16px;
  font: 16px/36px "Liberation Sans", "Noto Sans CJK SC", sans-serif;
  color: #222;
  text-align: center;
  white-space: nowrap;
}
.search {
  display: flex;
  align-items: center;
  width: 240px;
  height: 30px;
  background: linear-gradient(#808080, #5c5c5c);
}
.search-arrow {
  width: 0; height: 0;
  margin: 0 7px 0 6px;
  border-top: 4px solid transparent;
  border-bottom: 4px solid transparent;
  border-left: 4px solid #eee;
}
.search-input {
  flex: 1;
  height: 26px;
  padding-left: 3px;
  background: #5d5d5d;
  border: 1px solid #3a3a3a;
  font-size: 14px;
  line-height: 22px;
  font-style: italic;
  color: #a8a8a8;
}
.info-tools { width: 317px; padding-left: 5px; gap: 5px; }
.qi.user { margin-left: 5px; }
.login { font-size: 14.500px; color: #ddd; margin-left: 1px; }
.push { margin-left: auto; margin-right: 5px; }
.qi.a360 { margin-left: 6px; }
.help {
  width: 21px; height: 21px;
  margin: 0 6px 0 19px;
  border-radius: 50%;
  background: #f4f4f4;
  border: 2px solid #777;
  font: bold 15px/17px "Liberation Sans", sans-serif;
  color: #2460b8;
  text-align: center;
}
.win-ctl {
  display: flex;
  align-items: center;
  gap: 45px;
  height: 36px;
  padding-left: 51px;
  flex: 1;
}
.win-ctl svg { width: 14px; height: 14px; }
.wc { fill: none; stroke: #888; stroke-width: 1; }

/* menu bar */
.menubar {
  position: relative;
  display: flex;
  align-items: center;
  gap: 27.500px;
  height: 26px;
  padding-left: 65px;
  background: linear-gradient(#7a7a7a, #3f3f3f);
  border-top: 1px solid #333;
  border-bottom: 1px solid #2a2a2a;
  font: 15px/24px "Noto Sans CJK SC", "Liberation Sans", sans-serif;
  color: #ececec;
}
.menubar span { white-space: nowrap; }
.doc-ctl {
  display: flex;
  align-items: center;
  gap: 6px;
  margin-left: auto;
  padding-right: 6px;
}
.doc-ctl svg { width: 14px; height: 14px; }
.doc-x { font: bold 14px "Liberation Sans", sans-serif; color: #ddd; }

/* ribbon tabs */
.ribbon-tabs {
  display: flex;
  align-items: flex-end;
  height: 24px;
  padding-left: 3px;
  background: #3f3f3f;
  border-bottom: 1px solid #1f1f1f;
  font-size: 15px;
  line-height: 22px;
  color: #d4d4d4;
}
.ribbon-tabs > span { padding: 0 12px; white-space: nowrap; }
.ribbon-tabs > .on {
  height: 24px;
  margin-bottom: -1px;
  padding: 1px 11px 0;
  background: #474747;
  border: 1px solid #1f1f1f;
  border-bottom: 0;
  color: #f2f2f2;
}
.ribbon-tabs > .a360-tab { letter-spacing: .9px; }
.ribbon-tabs > .rt-toggle {
  display: flex;
  align-items: center;
  gap: 6px;
  height: 22px;
  padding-left: 30px;
}
.rt-pill { width: 15px; height: 8px; background: #e8e8e8; border-radius: 2px; }

/* ribbon */
.ribbon {
  display: flex;
  gap: 2px;
  height: 124px;
  padding: 2px 0 2px 1px;
  background: linear-gradient(#414141, #363636);
  border-bottom: 1px solid #888;
}
.pnl {
  display: flex;
  flex-direction: column;
  background: linear-gradient(#555, #4a4a4a);
}
.pnl-body { display: flex; flex: 1; min-height: 0; }
.pnl-foot {
  position: relative;
  height: 21px;
  padding-right: 18px;
  background: linear-gradient(#474747, #404040);
  font-size: 14.500px;
  line-height: 21px;
  text-align: center;
  color: #ddd;
}
.pnl-foot.center-foot { padding-right: 0; }
.foot-caret {
  margin-left: 3px;
  vertical-align: 2px;
  border-left: 5px solid transparent;
  border-right: 5px solid transparent;
  border-top: 5px solid #eee;
}
.launch {
  position: absolute;
  right: 5px; top: 0;
  font-size: 11px;
  font-weight: bold;
  color: #ddd;
}
.pnl-text { width: 376px; }
.pnl-dim { width: 393px; }
.pnl-center { width: 103px; }
.big-a {
  display: flex;
  flex-direction: column;
  align-items: center;
  width: 92px;
  padding-left: 3px;
}
.big-letter {
  font: 300 50px/52px "Lato", "Liberation Sans", sans-serif;
  color: #dedede;
}
.big-label { font-size: 14.500px; line-height: 20px; margin-top: -1px; color: #e6e6e6; }
.big-a .mini-caret { margin-top: 4px; border-left-width: 4px; border-right-width: 4px; border-top-width: 4px; }
.side-col {
  display: flex;
  flex-direction: column;
  align-items: center;
  gap: 10px;
  width: 31px;
  padding-top: 8px;
}
.ri { width: 20px; height: 20px; }
.combo-col {
  display: flex;
  flex-direction: column;
  gap: 4px;
  width: 250px;
  padding-top: 5px;
}
.combo {
  position: relative;
  height: 27px;
  padding-left: 3px;
  background: linear-gradient(#585858, #464646);
  border: 1px solid #2b2b2b;
  font: 15.500px/25px "Liberation Sans", "Noto Sans CJK SC", sans-serif;
  color: #ececec;
}
.combo::after {
  content: "";
  position: absolute;
  right: 5px; top: 11px;
  border-left: 5px solid transparent;
  border-right: 5px solid transparent;
  border-top: 5px solid #eee;
}
.combo.find { background: #5c5c5c; }
.combo.find::after { display: none; }
.combo em { font-family: "Noto Sans CJK SC", sans-serif; font-size: 14px; color: #999; }
.find-i { position: absolute; right: 0; top: 2px; width: 22px; height: 22px; }
.big-dim {
  display: flex;
  flex-direction: column;
  align-items: center;
  width: 50px;
  padding-top: 6px;
  font-size: 14.500px;
  line-height: 20px;
}
.big-dim svg { width: 36px; height: 38px; margin-bottom: 7px; }
.dim-col { width: 249px; }
.dim-row { display: flex; align-items: center; gap: 5px; }
.layers { margin-left: 2px; }
.swatch-combo { flex: 1; padding-left: 22px; font-family: "Noto Sans CJK SC", sans-serif; font-size: 15px; }
.swatch { position: absolute; left: 2px; top: 3px; width: 19px; height: 20px; background: #fff; border: 1px solid #222; }
.dim-tools { display: flex; align-items: center; gap: 9px; padding-left: 3px; height: 24px; }
.dim-grid {
  display: grid;
  grid-template-columns: repeat(3, 20px);
  grid-auto-rows: 20px;
  column-gap: 10px;
  row-gap: 10px;
  padding: 9px 0 0 4px;
}
.cm-btn {
  display: flex;
  flex-direction: column;
  align-items: center;
  flex: 1;
  padding-top: 7px;
  font-size: 14.500px;
  line-height: 20px;
}
.cm-btn svg { width: 38px; height: 38px; margin-bottom: 5px; }
.collapsed {
  display: flex;
  flex-direction: column;
  align-items: center;
  justify-content: space-between;
  width: 74px;
  padding: 9px 0 6px;
  background: linear-gradient(#666, #4e4e4e);
  font-size: 14.500px;
  line-height: 20px;
  color: #e0e0e0;
}

/* document tabs */
.doc-tabs {
  display: flex;
  align-items: flex-end;
  height: 33px;
  padding-left: 22px;
  background: linear-gradient(#3a3a3a, #404040);
  font: 16px/29px "Liberation Sans", "Noto Sans CJK SC", sans-serif;
}
.dt {
  height: 29px;
  white-space: nowrap;
  clip-path: polygon(0 100%, 10px 25%, 18px 0, calc(100% - 18px) 0, calc(100% - 10px) 25%, 100% 100%);
}
.dt-start { width: 164px; padding-left: 18px; background: #4c4c4c; color: #909090; }
.dt-active { width: 268px; margin-left: -3px; padding-left: 12px; background: linear-gradient(#686868, #585858); color: #e0e0e0; }
.dt-active b { margin-left: 10px; color: #8a8a8a; }
.dt-plus {
  width: 26px; height: 23px;
  margin: 0 0 3px 6px;
  border-radius: 5px;
  background: #585858;
  font: bold 18px/22px "Liberation Sans", sans-serif;
  text-align: center;
  color: #ddd;
}

/* workspace */
.workspace {
  display: flex;
  height: 713px;
  background: #5a5a5a;
}
.t20 {
  display: flex;
  flex-direction: column;
  width: 115px;
  height: 709px;
  margin-top: 0;
  background: #ece9d8;
}
.t20-head {
  height: 39px;
  padding: 8px 0 0 19px;
  background: linear-gradient(#3e3e3e 0 5px, #5e5e5e 5px, #555);
  font: 15px/22px "Liberation Sans", sans-serif;
  color: #e6e6e6;
}
.t20-list {
  margin: 0;
  padding: 2px 0 0;
  list-style: none;
  font: 15px/18px "Noto Sans CJK SC", sans-serif;
  color: #1a1a1a;
}
.t20-list li {
  position: relative;
  height: 18px;
  padding-left: 28px;
}
.t20-list li::before {
  content: "";
  position: absolute;
  left: 8px; top: 4px;
  border-top: 5px solid transparent;
  border-bottom: 5px solid transparent;
  border-left: 6px solid #2d6a9c;
}
.t20-list li span {
  display: block;
  width: 60px;
  text-align: justify;
  text-align-last: justify;
  white-space: nowrap;
}
.t20-list .buy::before { display: none; }
.t20-list .buy svg { position: absolute; left: 2px; top: 2px; width: 20px; height: 14px; }
.tool-strip {
  flex: none;
  width: 37px;
  padding: 5px 0 0 2px;
  background: #5a5a5a;
}
.tool-strip.right { width: 38px; padding: 5px 0 0 5px; }
.tool-col {
  display: flex;
  flex-direction: column;
  align-items: center;
  gap: 4px;
  width: 31px;
  padding-bottom: 3px;
  border: 1px solid #333;
  background: #585858;
}
.tool-col svg { width: 24px; height: 24px; }
.grip {
  width: 100%;
  height: 6px;
  background: repeating-linear-gradient(90deg, #ccc 0 1px, transparent 1px 2px) center / 14px 3px no-repeat, #3a3a3a;
}
.tool-a { font: bold 24px/24px "Liberation Sans", sans-serif; color: #e8e8e8; height: 24px; }

/* drawing canvas */
.canvas {
  position: relative;
  flex: none;
  width: 1215px;
  height: 710px;
  margin-top: 3px;
  background: #000;
  overflow: hidden;
}
.cad { width: 1215px; height: 710px; }
.teal path { fill: none; stroke: #12abb0; stroke-width: 1.600; }
.green path { fill: none; stroke: #1ed01e; stroke-width: 1.300; }
.ticks path { fill: none; stroke: #1eea1e; stroke-width: 3.500; }
.yellow path { fill: none; stroke: #c9c92e; stroke-width: 1.300; }
.redcl { fill: none; stroke: #e0104c; stroke-width: 1.200; stroke-dasharray: 34 6 4 6; }
.white path, .white ellipse, .white circle { fill: none; stroke: #e0e0e0; stroke-width: 1.200; }
.apoint { fill: #fff; }
.cad-t {
  font: 300 36px "Lato", "Liberation Sans", sans-serif;
  fill: #dcdcdc;
}
.cad-t.t26 { font-size: 30px; }
.cad-t.t30 { font-size: 29px; }
.cad-g { font: 300 24px "Lato", "Liberation Sans", sans-serif; fill: #1ecc1e; }
.cad-s { font: 15px "Liberation Sans", sans-serif; fill: #e6e6e6; }
.cad-c { font: 26px "Noto Sans CJK SC", sans-serif; fill: #e4e4e4; }
.note { font: 33px "Noto Sans CJK SC", sans-serif; fill: #e3261c; }
.red { fill: none; stroke: #e3261c; stroke-width: 3.500; }
.redf { fill: #ef2a1e; }
.cube-ring { fill: none; stroke: #2f2f2f; stroke-width: 15; }
.cube-face { fill: #a5a5a5; }
.cube-inner { fill: #8f8f8f; }
.cube-top { font: 32px "Noto Sans CJK SC", sans-serif; fill: #5f5f5f; text-anchor: middle; }
.cube-l { font: 19px "Noto Sans CJK SC", sans-serif; fill: #a8a8a8; text-anchor: middle; }
.view-label {
  position: absolute;
  left: 3px; top: 6px;
  font: 15px/20px "Noto Sans CJK SC", sans-serif;
  letter-spacing: .6px;
  color: #e8e8e8;
}
.wcs {
  position: absolute;
  left: 1103px; top: 170px;
  display: flex;
  align-items: center;
  gap: 7px;
  width: 57px; height: 20px;
  padding-left: 5px;
  border-radius: 6px;
  background: #7e7e86;
  font: 13px/20px "Liberation Sans", sans-serif;
  letter-spacing: .5px;
  color: #45454a;
}
.wcs i { border-left: 5px solid transparent; border-right: 5px solid transparent; border-top: 4px solid #9a9aa0; }
.navbar {
  position: absolute;
  left: 1172px; top: 222px;
  display: flex;
  flex-direction: column;
  align-items: center;
  justify-content: space-between;
  width: 40px; height: 258px;
  padding: 4px 0;
  border-radius: 4px;
  background: rgba(78, 78, 78, .82);
}
.navbar svg { width: 40px; height: 44px; }
.nb-dot { width: 8px; height: 8px; border-radius: 50%; background: #333; align-self: flex-end; margin-right: 4px; }
.nb { fill: none; stroke: #333; stroke-width: 2; }
.nbf { fill: #3a3a3a; }
.cmd-history {
  position: absolute;
  left: 75px; top: 603px;
  display: flex;
  flex-direction: column;
  align-items: flex-start;
  gap: 5px;
  font: 16px/20px "Liberation Mono", "Noto Sans CJK SC", monospace;
  letter-spacing: -.2px;
}
.cmd-line { padding: 0 2px; height: 20px; background: #5a5a5a; border-radius: 2px; color: #d8d8d8; white-space: pre; }
.cmd-line.dim { color: #aaa; }
.cmd-line.bright { color: #f2f2f2; }
.cmdbar {
  position: absolute;
  left: 0; top: 677px;
  display: flex;
  width: 712px; height: 33px;
}
.cmd-tools {
  display: flex;
  align-items: center;
  gap: 15px;
  width: 68px;
  padding-left: 2px;
  background: linear-gradient(rgba(70, 70, 70, .75), rgba(30, 30, 30, .75));
}
.cmd-tools svg { width: 20px; height: 20px; }
.cmd-grip {
  width: 6px; height: 24px;
  background: repeating-linear-gradient(#aa88aa 0 2px, transparent 2px 4px);
}
.cmd-input {
  position: relative;
  display: flex;
  align-items: center;
  gap: 6px;
  flex: 1;
  padding-left: 7px;
  background: rgba(185, 185, 185, .9);
  border-radius: 2px 2px 0 0;
}
.cmd-prompt {
  width: 20px; height: 22px;
  background: #8a8a8a;
  border-radius: 3px;
  font: bold 13px/22px "Liberation Mono", monospace;
  color: #333;
  text-align: center;
}
.cmd-caret { border-left: 4px solid transparent; border-right: 4px solid transparent; border-top: 4px solid #444; }
.cmd-input em { margin-left: 2px; font-size: 15px; color: #7c7c7c; }
.cmd-up {
  position: absolute;
  right: 6px; top: 15px;
  border-left: 5px solid transparent;
  border-right: 5px solid transparent;
  border-bottom: 6px solid #222;
}

/* model tabs + status */
.bottom { flex: none; height: 71px; background: #3f3f3f; }
.layout-row {
  display: flex;
  height: 37px;
  padding-left: 14px;
}
.ltab {
  width: 60px; height: 24px;
  margin-right: 3px;
  background: linear-gradient(#5c5c5c, #4c4c4c);
  clip-path: polygon(0 0, 100% 0, 92% 100%, 8% 100%);
  font: 14.500px/25px "Noto Sans CJK SC", sans-serif;
  text-align: center;
  color: #929292;
}
.ltab + .ltab { width: 66px; }
.ltab.on { background: linear-gradient(#8c8c8c, #5c5c5c); font-weight: bold; color: #f4f4f4; }
.ltab.plus { width: 28px; margin-left: 5px; font: bold 18px/24px "Liberation Sans", sans-serif; color: #ccc; }
.scale-group { display: flex; margin-left: auto; height: 37px; margin-right: 3px; }
.scale {
  display: flex;
  align-items: center;
  gap: 5px;
  width: 86px;
  padding-left: 1px;
  background: #5a5a5a;
  border: 1px solid #6a6a6a;
  border-bottom: 0;
  font: 14px/20px "Noto Sans CJK SC", sans-serif;
  white-space: nowrap;
  color: #f2f2f2;
}
.scale-blank { width: 263px; background: #555; }
.scale-dots { display: flex; align-items: center; justify-content: flex-end; gap: 10px; width: 33px; padding-right: 4px; background: #555; }
.dots { width: 8px; height: 16px; background: radial-gradient(#aaa 1px, transparent 1px) 0 0 / 4px 4px; }
.scale-note { display: flex; align-items: center; justify-content: center; width: 32px; background: #5a5a5a; border-left: 1px solid #777; }
.scale-note svg { width: 18px; height: 24px; }
.statusbar {
  display: flex;
  height: 31px;
  margin-left: 26px;
  margin-right: 3px;
  border-top: 1px solid #7a7a7a;
  border-bottom: 1px solid #7a7a7a;
  background: #585858;
}
.st {
  display: flex;
  align-items: center;
  justify-content: space-around;
  flex: none;
  border-left: 1px solid #7a7a7a;
  padding: 0 2px;
}
.st svg { width: 23px; height: 23px; }
.st.st-num { justify-content: flex-start; gap: 18px; padding: 0 10px 0 11px; }
.st.st-num .white-caret { margin-left: auto; }
.w25 { width: 25px; } .w30 { width: 30px; } .w32 { width: 32px; } .w35 { width: 35px; }
.w51 { width: 51px; } .w79 { width: 79px; } .w123 { width: 123px; } .w129 { width: 129px; }
.w130 { width: 130px; } .w133 { width: 133px; } .w182 { width: 182px; } .w183 { width: 183px; }
.st-t { font: 15px/20px "Noto Sans CJK SC", sans-serif; white-space: nowrap; color: #eee; letter-spacing: -.3px; }
.st svg.ruler { width: 10px; height: 22px; }
.gear { fill: none; stroke: #9a9a9a; stroke-width: 4; stroke-dasharray: 4 3.330; }

/* things painted over the window */
.peek { position: absolute; color: #ddd; font-family: "Liberation Sans", sans-serif; }
.peek-e { left: 1089px; top: 912px; font: bold 58px/60px "Liberation Sans", sans-serif; color: #c8c8c8; }
.peek-ji { left: 1091px; top: 966px; font-size: 34px; line-height: 40px; }
.watermark {
  position: absolute;
  left: 1107px; top: 896px;
  display: flex;
  align-items: center;
  gap: 15px;
  width: 235px; height: 116px;
  padding: 0 0 4px 13px;
  background: #212f54;
}
.watermark svg { width: 50px; height: 64px; }
.wm { fill: none; stroke: #c9ccd4; stroke-width: 4; stroke-linecap: round; }
.wm.thin { stroke-width: 2; }
.wmf { fill: #c9ccd4; }
.wm-text { display: flex; flex-direction: column; gap: 2px; }
.wm-text strong { font-size: 33px; line-height: 38px; letter-spacing: 4px; font-weight: 500; color: #d4d6dc; white-space: nowrap; }
.wm-text span { font: 13.500px/16px "Liberation Sans", sans-serif; letter-spacing: 2.300px; color: #aeb3c0; white-space: nowrap; }
.ime {
  position: absolute;
  left: 1342px; top: 933px;
  display: flex;
  align-items: center;
  gap: 6px;
  width: 79px; height: 29px;
  padding-left: 5px;
  background: #fff;
}
.ime svg { width: 22px; height: 22px; }
.ime span { font: bold 17px/26px "Liberation Sans", sans-serif; color: #1f78c8; }
.ime-s { fill: none; stroke: #1f78c8; stroke-width: 2; }
.ime-f { fill: #1f78c8; }
```
